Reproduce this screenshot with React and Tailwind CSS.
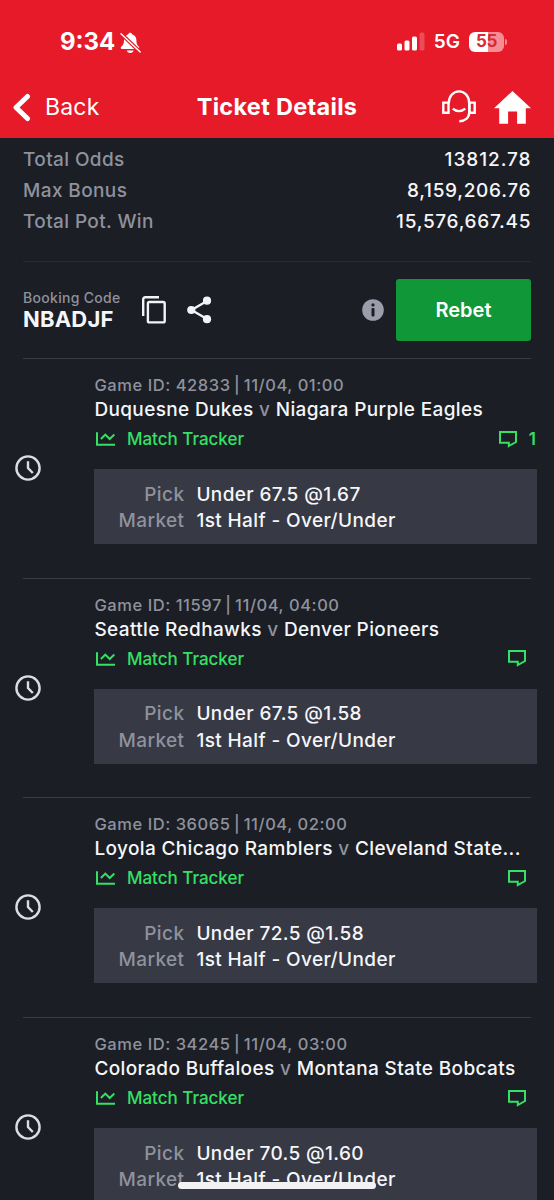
import React from 'react';

const stats = [
  { label: 'Total Odds', value: '13812.78', tracking: 'tracking-[0.95px] -mr-[0.5px]' },
  { label: 'Max Bonus', value: '8,159,206.76', tracking: 'tracking-[0.7px] -mr-[0.2px]' },
  { label: 'Total Pot. Win', value: '15,576,667.45', tracking: 'tracking-[0.7px] -mr-[0.2px]' },
];

const games = [
  { id: '42833', date: '11/04, 01:00', home: 'Duquesne Dukes', away: 'Niagara Purple Eagles', pick: 'Under 67.5 @1.67', comments: 1 },
  { id: '11597', date: '11/04, 04:00', home: 'Seattle Redhawks', away: 'Denver Pioneers', pick: 'Under 67.5 @1.58' },
  { id: '36065', date: '11/04, 02:00', home: 'Loyola Chicago Ramblers', away: 'Cleveland State...', pick: 'Under 72.5 @1.58' },
  { id: '34245', date: '11/04, 03:00', home: 'Colorado Buffaloes', away: 'Montana State Bobcats', pick: 'Under 70.5 @1.60' },
];

const BellOffIcon = () => (
  <svg width="21" height="22" viewBox="0 0 21 22" className="mt-[2px] ml-[5px]">
    <path d="M10.2 0.8c-1 0-1.7.6-1.9 1.5C5.500 3.200 4 5.500 4 8.300c0 3.700-1 5-2.800 6.400-.8.9-.6 2.300.9 2.300h15.800c1.500 0 1.700-1.400.9-2.300-1.600-1.400-2.400-2.700-2.400-6.400 0-2.800-1.500-5.100-4.300-6C12 1.400 11.200.8 10.200.8z" fill="white" />
    <path d="M6.800 18.400h6.800c-.3 1.400-1.600 2.500-3.400 2.500S7.100 19.800 6.800 18.400z" fill="white" />
    <path d="M1 1.700 20.200 20" stroke="#e61a28" strokeWidth="3.800" />
    <path d="M1 1.700 20.200 20" stroke="white" strokeWidth="1.500" strokeLinecap="round" />
  </svg>
);

const SignalIcon = () => (
  <svg width="28" height="19" viewBox="0 0 28 19">
    <rect x="0" y="11.500" width="5" height="7" rx="1.500" fill="white" />
    <rect x="7.500" y="8.500" width="5" height="10" rx="1.500" fill="white" />
    <rect x="15" y="4.500" width="5" height="14" rx="1.500" fill="white" />
    <rect x="22.500" y="0.500" width="5" height="18" rx="1.500" fill="white" fillOpacity="0.220" />
  </svg>
);

const Battery = () => (
  <div className="ml-[9px] flex items-center">
    <div className="flex h-5 w-[35px] items-center justify-center rounded-[6px] bg-[linear-gradient(90deg,#fff_55%,#f48d94_55%)]">
      <span className="text-[17px] leading-none font-bold tracking-[-0.3px] text-[#d92a35]">55</span>
    </div>
    <div className="ml-px h-[6px] w-[2px] rounded-r-full bg-[#f48d94]" />
  </div>
);

const HeadsetIcon = () => (
  <svg width="34" height="34" viewBox="0 0 34 34" fill="none" stroke="white" strokeWidth="2.400">
    <path d="M1.300 12.600h5.200v10.200H1.300zM27.500 12.600h5.200v10.200h-5.200z" />
    <path d="M6.800 13.200C6.800 6.500 11 1.400 17 1.400s10.200 5.100 10.200 11.800v9.600c0 4.800-4.300 8.400-9.900 8.400" />
    <path d="M10.800 18.700c1.700 1.600 3.800 2.400 6.200 2.400s4.500-.8 6.200-2.400" />
  </svg>
);

const HomeIcon = () => (
  <svg width="37" height="33" viewBox="0 0 37 33" className="ml-[18px]">
    <path d="M18.500 0 37 17.300h-5.200V32.700h-8.700V20.500h-9v12.200H5.200V17.300H0z" fill="white" />
  </svg>
);

const CopyIcon = () => (
  <svg width="24" height="28" viewBox="0 0 24 28" fill="none" stroke="#f2f4f8" strokeWidth="2.400">
    <path d="M1.200 20V3.200c0-1.100.9-2 2-2H17" />
    <rect x="5.900" y="6" width="16.800" height="20.400" rx="1.500" />
  </svg>
);

const ShareIcon = () => (
  <svg width="25" height="28" viewBox="0 0 25 28">
    <path d="M20 5 4.500 14 20 23" fill="none" stroke="#f2f4f8" strokeWidth="2.400" />
    <circle cx="20" cy="4.700" r="4.100" fill="#f2f4f8" />
    <circle cx="4.300" cy="14" r="4.100" fill="#f2f4f8" />
    <circle cx="20" cy="23.200" r="4.100" fill="#f2f4f8" />
  </svg>
);

const InfoIcon = () => (
  <svg width="22" height="22" viewBox="0 0 22 22">
    <circle cx="11" cy="11" r="10.800" fill="#9b9daa" />
    <circle cx="11" cy="5.900" r="1.600" fill="#1b1e25" />
    <rect x="9.500" y="9" width="3" height="8.500" rx="1" fill="#1b1e25" />
  </svg>
);

const ClockIcon = () => (
  <svg width="26" height="26" viewBox="0 0 26 26" fill="none" stroke="#dcdde0" strokeWidth="2.400">
    <circle cx="13" cy="13" r="11.600" />
    <path d="M13 6.300v6.700l4.800 5" />
  </svg>
);

const TrackerIcon = () => (
  <svg width="19" height="14" viewBox="0 0 19 14" fill="none" stroke="#35e065" strokeWidth="2">
    <path d="M1 .3v12.500h18" />
    <path d="m4.900 7 4.400-4.400L13.700 7l4.700-4.500" />
  </svg>
);

const CommentIcon = () => (
  <svg width="18" height="17" viewBox="0 0 18 17" fill="none" stroke="#35e065" strokeWidth="2">
    <path d="M1 1h16v10l-7.200 4v-3.300H1z" />
  </svg>
);

const GameRow = ({ game }) => (
  <div className="flex h-[219.700px] border-t-[1.500px] border-[#383b45]">
    <div className="w-[71.400px] shrink-0 pt-[96px]">
      <div className="-ml-2">
        <ClockIcon />
      </div>
    </div>
    <div className="-mr-[6px] flex-1 pt-[15px]">
      <div className="h-[23px] text-[16.500px] leading-[23px] font-medium tracking-[0.560px] whitespace-nowrap text-[#8f929d]">
        Game ID: {game.id} <span className="-mx-[1.500px]">|</span> {game.date}
      </div>
      <div className="h-[26px] text-[19px] leading-[26px] font-medium tracking-[0.360px] whitespace-nowrap text-[#f5f6f9]">
        {game.home} <span className="text-[#8f929d]">v</span> {game.away}
      </div>
      <div className="mt-[3px] flex h-[26px] items-center justify-between text-[#35e065]">
        <div className="flex items-center gap-[12px] pl-[1.500px]">
          <TrackerIcon />
          <span className="text-[17px] leading-[26px] font-medium">Match Tracker</span>
        </div>
        <div className={game.comments ? 'flex items-center gap-[12px] pr-px' : 'flex items-center pr-[11px]'}>
          <CommentIcon />
          {game.comments && <span className="text-[17px] leading-[26px] font-semibold">{game.comments}</span>}
        </div>
      </div>
      <div className="mt-[17px] grid h-[75px] grid-cols-[90px_1fr] content-start gap-x-3 bg-[#373944] pt-[12.500px] text-[19px] leading-[26.500px] font-medium tracking-[0.380px]">
        <span className="text-right text-[#8f929d]">Pick</span>
        <span className="text-[#f5f6f9]">{game.pick}</span>
        <span className="text-right text-[#8f929d]">Market</span>
        <span className="text-[#f5f6f9]">1st Half - Over/Under</span>
      </div>
    </div>
  </div>
);

export default function App() {
  return (
    <div className="relative flex h-[1200px] w-[554px] flex-col overflow-hidden bg-[#1b1e25] font-['Inter',sans-serif]">
      {/* Status bar + nav */}
      <header className="h-[138px] shrink-0 bg-[#e61a28] text-white">
        <div className="flex h-[83px] items-center justify-between pr-[47px] pl-[60px]">
          <div className="flex items-center">
            <span className="text-[24px] leading-none font-bold">9:34</span>
            <BellOffIcon />
          </div>
          <div className="flex items-center">
            <SignalIcon />
            <span className="ml-[9px] text-[19px] leading-none font-semibold">5G</span>
            <Battery />
          </div>
        </div>
        <div className="grid h-[48px] grid-cols-3 items-center px-[12px]">
          <div className="flex items-center">
            <svg width="19" height="29" viewBox="0 0 19 29" fill="none">
              <path d="M15.500 3.500 4 14.500l11.500 11" stroke="white" strokeWidth="5" strokeLinecap="round" strokeLinejoin="round" />
            </svg>
            <span className="ml-[14px] text-[23px] leading-none tracking-[0.200px]">Back</span>
          </div>
          <h1 className="text-center text-[23.500px] leading-none font-bold tracking-[0.300px] whitespace-nowrap">Ticket Details</h1>
          <div className="flex items-center justify-end pr-[11px]">
            <HeadsetIcon />
            <HomeIcon />
          </div>
        </div>
      </header>

      <main className="flex shrink-0 flex-col px-[23px]">
        <div className="flex h-[123px] shrink-0 flex-col pt-[6px] text-[19px] leading-[31px] font-medium">
          {stats.map((s) => (
            <div key={s.label} className="flex justify-between">
              <span className="tracking-[0.380px] text-[#8f929d]">{s.label}</span>
              <span className={`text-[#f5f6f9] ${s.tracking}`}>{s.value}</span>
            </div>
          ))}
        </div>

        {/* Booking code */}
        <div className="flex h-[97px] shrink-0 items-center border-t border-[#272a32]">
          <div className="w-[119px]">
            <div className="text-[14px] leading-[18px] font-medium tracking-[0.300px] text-[#8f929d]">Booking Code</div>
            <div className="text-[22px] leading-[25px] font-bold tracking-[0.200px] text-[#f5f6f9]">NBADJF</div>
          </div>
          <CopyIcon />
          <div className="ml-[21px]">
            <ShareIcon />
          </div>
          <div className="ml-auto">
            <InfoIcon />
          </div>
          <button className="ml-3 h-[62px] w-[135px] rounded-[3px] bg-[#109737] text-[20px] font-semibold text-white">
            Rebet
          </button>
        </div>

        {games.map((game) => (
          <GameRow key={game.id} game={game} />
        ))}
      </main>

      {/* Home indicator */}
      <div className="absolute bottom-[11px] left-[178px] h-[7px] w-[198px] rounded-full bg-[#f2f2f4]" />
    </div>
  );
}
